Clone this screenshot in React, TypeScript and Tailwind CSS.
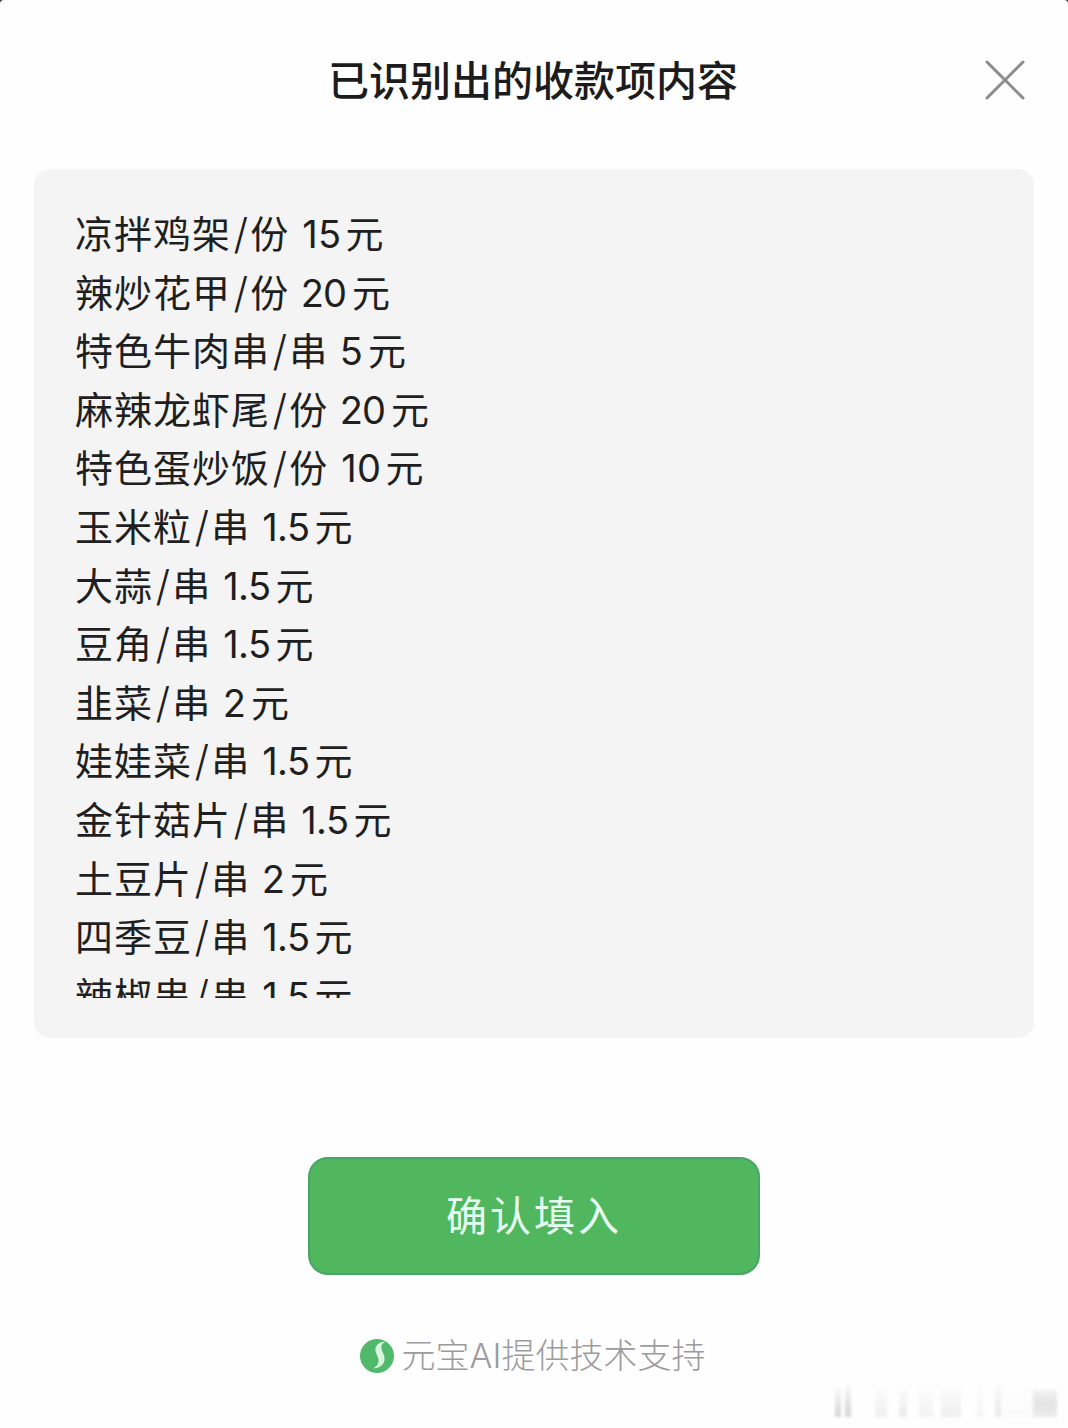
import React from 'react';
import clsx from 'clsx';

interface MenuItem {
  name: string;
  unit: string;
  price: string;
}

const items: MenuItem[] = [
  { name: '凉拌鸡架', unit: '份', price: '15' },
  { name: '辣炒花甲', unit: '份', price: '20' },
  { name: '特色牛肉串', unit: '串', price: '5' },
  { name: '麻辣龙虾尾', unit: '份', price: '20' },
  { name: '特色蛋炒饭', unit: '份', price: '10' },
  { name: '玉米粒', unit: '串', price: '1.5' },
  { name: '大蒜', unit: '串', price: '1.5' },
  { name: '豆角', unit: '串', price: '1.5' },
  { name: '韭菜', unit: '串', price: '2' },
  { name: '娃娃菜', unit: '串', price: '1.5' },
  { name: '金针菇片', unit: '串', price: '1.5' },
  { name: '土豆片', unit: '串', price: '2' },
  { name: '四季豆', unit: '串', price: '1.5' },
  { name: '辣椒串', unit: '串', price: '1.5' },
];

// the narrow "1" needs looser tracking than the other digits
const priceSpacing = (price: string) =>
  clsx({
    'mr-[5px] tracking-[-0.6px]': price.startsWith('1.'),
    'mr-1 tracking-[0.4px]': price.startsWith('1') && !price.includes('.'),
    'mr-[6px] tracking-[-1px]': !price.startsWith('1'),
  });

function CloseIcon() {
  return (
    <svg viewBox="0 0 40 40" className="h-10 w-10" fill="none" stroke="#8c8c8c" strokeWidth="3" strokeLinecap="round">
      <path d="M2 2 38 38M38 2 2 38" />
    </svg>
  );
}

function YuanbaoLogo() {
  return (
    <svg viewBox="0 0 34 34" className="h-[34px] w-[34px] shrink-0">
      <circle cx="17" cy="17" r="17" fill="#50b96a" />
      <path
        d="M26 2.500C19.500 2.500 14.500 6.500 15.500 12C16.300 16.500 20 19.500 18 24.500C17 27 15 28.500 12.500 29.500C19.500 29.500 25 25.500 24.500 19C24.200 14 20.500 11.500 21.500 7C22 4.800 24 3.500 26 2.500Z"
        fill="#d8f6df"
      />
    </svg>
  );
}

function Watermark() {
  return (
    <div className="absolute right-[11px] bottom-[11px] flex h-8 w-[222px] items-stretch opacity-55 blur-[1.5px]">
      <div className="mr-1 w-1.5 bg-linear-to-b from-transparent to-[#b0b0b0]" />
      <div className="mr-6 w-1.5 bg-linear-to-b from-[#f3f3f3] to-[#b0b0b0]" />
      <div className="mr-3 w-3 bg-linear-to-b from-transparent to-[#e2e2e2]" />
      <div className="mr-3 w-2 bg-linear-to-b from-transparent to-[#dadada]" />
      <div className="mr-2 w-3.5 bg-linear-to-b from-transparent to-[#e6e6e6]" />
      <div className="mr-4 w-5 bg-linear-to-b from-transparent to-[#e2e2e2]" />
      <div className="mr-3 w-1.5 bg-linear-to-b from-transparent to-[#ececec]" />
      <div className="w-1.5 bg-linear-to-b from-[#f6f6f6] to-[#dadada]" />
      <div className="grow bg-linear-to-b from-transparent to-[#f8f8f8]" />
      <div className="mt-1 w-6 bg-linear-to-b from-[#eeeeee] via-[#cecece] to-[#dedede]" />
    </div>
  );
}

export default function App() {
  return (
    <div className="bg-[#3a3a3a]">
      <div className="relative flex h-[1428px] w-[1068px] flex-col items-center rounded-t-[4px] bg-[#fefefe] font-['Inter','Noto_Sans_CJK_SC',sans-serif]">
        <header className="grid h-[169px] w-full grid-cols-[1fr_auto_1fr] items-start px-[43px] pt-[60px]">
          <h1 className="col-start-2 pt-px pr-0.5 text-[41px] leading-10 font-medium whitespace-nowrap text-[#1c1c1c]">
            已识别出的收款项内容
          </h1>
          <button type="button" aria-label="关闭" className="justify-self-end">
            <CloseIcon />
          </button>
        </header>

        <section className="h-[869px] w-[1000px] shrink-0 rounded-[16px] bg-[#f4f4f4] px-[41px] pt-9 pb-10">
          <ul className="h-full overflow-hidden text-[38px] leading-[58.6px] tracking-[1px] text-[#1f1f1f]">
            {items.map((item) => (
              <li key={item.name} className="h-[58.6px] whitespace-nowrap">
                {item.name}
                <span className="mr-[1px] ml-[2.5px] align-[-1px] text-[42px] leading-none font-light">/</span>
                {item.unit}
                <span className={clsx('ml-[2px]', priceSpacing(item.price))}> {item.price}</span>
                元
              </li>
            ))}
          </ul>
        </section>

        <button
          type="button"
          className="mt-[119px] h-[118px] w-[452px] shrink-0 rounded-[20px] border-2 border-[#48a568] bg-[#50b75e] pt-0.5 text-[41px] tracking-[3px] text-[#e6fff3]"
        >
          确认填入
        </button>

        <footer className="mt-[63px] flex h-[36px] items-center gap-2 pr-[3px] text-[34px] leading-9 font-light whitespace-nowrap text-[#9c9c9c]">
          <YuanbaoLogo />
          <span>元宝AI提供技术支持</span>
        </footer>

        <Watermark />
      </div>
    </div>
  );
}
